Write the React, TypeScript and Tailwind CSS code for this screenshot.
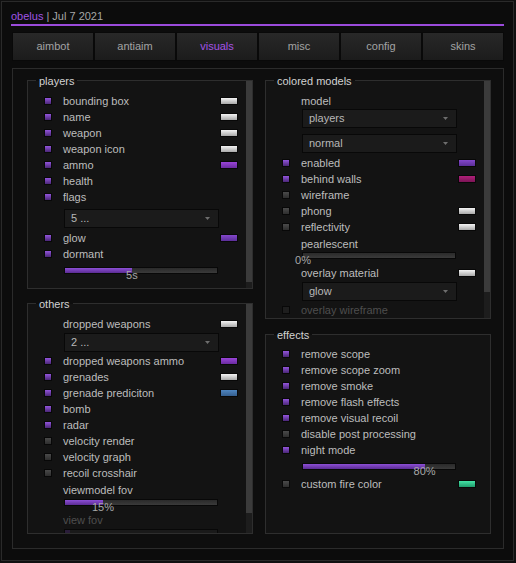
import React from "react";

const font = { fontFamily: '"Liberation Sans", Arial, sans-serif' };

type Swatch = "white" | "purple" | "blue" | "magenta" | "green" | "violet";

const swatchClass: Record<Swatch, string> = {
  white: "bg-gradient-to-b from-[#f4f4f4] to-[#a9a9a9]",
  purple: "bg-gradient-to-b from-[#9a45d8] to-[#6a2ba0]",
  violet: "bg-gradient-to-b from-[#8447cc] to-[#5b2f98]",
  blue: "bg-gradient-to-b from-[#4f86c0] to-[#355f8f]",
  magenta: "bg-gradient-to-b from-[#b0207a] to-[#7c1556]",
  green: "bg-gradient-to-b from-[#44e3a6] to-[#1f9c6c]",
};

const Check = ({ on, dim }: { on?: boolean; dim?: boolean }) => (
  <div
    className={
      "w-[8px] h-[8px] border border-[#080808] " +
      (dim
        ? "bg-[#1e1e1e]"
        : on
          ? "bg-gradient-to-b from-[#9355dc] to-[#4b2778]"
          : "bg-gradient-to-b from-[#4a4a4a] to-[#2e2e2e]")
    }
  />
);

interface RowProps {
  label: string;
  check?: boolean | null;
  swatch?: Swatch;
  dim?: boolean;
  className?: string;
}

const Row = ({ label, check = null, swatch, dim, className = "" }: RowProps) => (
  <div className={"h-[16px] flex items-center " + className}>
    <div className="w-[19px] flex items-center">
      {check !== null && <Check on={check} dim={dim} />}
    </div>
    <span
      className={
        "flex-1 whitespace-nowrap leading-[16px] " +
        (dim ? "text-[#4e4e4e]" : "text-[#bdbdbd]")
      }
    >
      {label}
    </span>
    {swatch && (
      <div className={"w-[18px] h-[8px] border border-[#080808] " + swatchClass[swatch]} />
    )}
  </div>
);

const Dropdown = ({ value, className = "" }: { value: string; className?: string }) => (
  <div
    className={
      "ml-[20px] w-[155px] h-[19px] border border-[#080808] bg-[#1b1b1b] flex items-center pl-[6px] pr-[8px] " +
      className
    }
  >
    <span className="flex-1 text-[#b8b8b8] leading-[17px]">{value}</span>
    <svg width="5" height="3" viewBox="0 0 5 3">
      <path d="M0 0h5L2.5 3z" fill="#6e6e6e" />
    </svg>
  </div>
);

const Slider = ({
  pct,
  label,
  dim,
  className = "",
}: {
  pct: number;
  label?: string;
  dim?: boolean;
  className?: string;
}) => (
  <div
    className={
      "relative ml-[20px] w-[154px] h-[7px] border border-[#080808] " +
      (dim ? "bg-[#1a1a1a] " : "bg-gradient-to-b from-[#2a2a2a] to-[#3a3a3a] ") +
      className
    }
  >
    <div
      className={dim ? "h-full bg-[#2a1d3a]" : "h-full bg-gradient-to-b from-[#8d4fd6] to-[#5b2c93]"}
      style={{ width: `${pct}%` }}
    />
    {label && (
      <span
        className="absolute top-[1px] -translate-x-1/2 text-[#a8a8a8] leading-[13px] whitespace-nowrap"
        style={{ left: `${pct}%` }}
      >
        {label}
      </span>
    )}
  </div>
);

const Group = ({
  title,
  height,
  thumb,
  children,
}: {
  title: string;
  height: string;
  thumb?: string;
  children: React.ReactNode;
}) => (
  <div className={"relative w-[226px] border border-[#2e2e2e] bg-[#131313] flex " + height}>
    <span className="absolute -top-[6px] left-[8px] px-[3px] leading-[13px] text-[#d2d2d2] bg-[linear-gradient(to_bottom,#0e0e0e_50%,#131313_50%)]">
      {title}
    </span>
    <div className={"flex-1 overflow-hidden pl-[16px] " + (thumb ? "pr-[8px]" : "pr-[14px]")}>
      {children}
    </div>
    {thumb && (
      <div className="w-[6px] flex flex-col">
        <div className={"bg-[#3b3b3b] " + thumb} />
        <div className="flex-1 bg-[#1d1d1d]" />
      </div>
    )}
  </div>
);

const tabs = ["aimbot", "antiaim", "visuals", "misc", "config", "skins"];

export default function App() {
  return (
    <div className="w-[516px] h-[563px] bg-[#101010] pt-px pl-px text-[11px]" style={font}>
      <div className="w-[513px] h-[560px] border border-[#2a2a2a] bg-[#0c0c0c]">
        <div className="h-[22px] flex items-end pl-[9px] pb-[1px]">
          <span className="leading-[14px] text-[#a055e4]">obelus</span>
          <span className="leading-[14px] text-[#a6a6a6] ml-[3px]">| Jul 7 2021</span>
        </div>
        <div className="ml-[9px] w-[493px] h-[2px] bg-[#9b4bdb]" />

        <div className="mt-[6px] ml-[10px] flex">
          {tabs.map((t) => (
            <div
              key={t}
              className={
                "w-[82px] h-[29px] border border-[#090909] bg-gradient-to-b from-[#282828] to-[#1c1c1c] flex items-center justify-center " +
                (t === "visuals" ? "text-[#a452e6]" : "text-[#a3a3a3]")
              }
            >
              {t}
            </div>
          ))}
        </div>

        <div className="mt-[7px] ml-[10px] w-[492px] h-[481px] border border-[#2b2b2b] bg-[#0e0e0e] pt-[11px] pl-[14px] flex gap-[12px]">
          <div className="flex flex-col gap-[14px]">
            <Group title="players" height="h-[209px]" thumb="h-[201px]">
              <div className="pt-[12px]">
                <Row label="bounding box" check swatch="white" />
                <Row label="name" check swatch="white" />
                <Row label="weapon" check swatch="white" />
                <Row label="weapon icon" check swatch="white" />
                <Row label="ammo" check swatch="purple" />
                <Row label="health" check />
                <Row label="flags" check />
                <Dropdown value="5 ..." className="mt-[4px]" />
                <Row label="glow" check swatch="violet" className="mt-[2px]" />
                <Row label="dormant" check />
                <Slider pct={44} label="5s" className="mt-[5px]" />
              </div>
            </Group>
            <Group title="others" height="h-[231px]" thumb="h-[209px]">
              <div className="pt-[12px]">
                <Row label="dropped weapons" swatch="white" />
                <Dropdown value="2 ..." className="mt-[1px]" />
                <Row label="dropped weapons ammo" check swatch="purple" className="mt-[1px]" />
                <Row label="grenades" check swatch="white" />
                <Row label="grenade prediciton" check swatch="blue" />
                <Row label="bomb" check />
                <Row label="radar" check />
                <Row label="velocity render" check={false} />
                <Row label="velocity graph" check={false} />
                <Row label="recoil crosshair" check={false} />
                <Row label="viewmodel fov" className="mt-[1px]" />
                <Slider pct={25} label="15%" className="mt-[1px]" />
                <Row label="view fov" dim className="mt-[6px]" />
                <Slider pct={3} dim className="mt-[1px]" />
              </div>
            </Group>
          </div>

          <div className="flex flex-col gap-[15px]">
            <Group title="colored models" height="h-[239px]" thumb="h-[211px]">
              <div className="pt-[12px]">
                <Row label="model" />
                <Dropdown value="players" />
                <Dropdown value="normal" className="mt-[6px]" />
                <Row label="enabled" check swatch="violet" className="mt-[2px]" />
                <Row label="behind walls" check swatch="magenta" />
                <Row label="wireframe" check={false} />
                <Row label="phong" check={false} swatch="white" />
                <Row label="reflectivity" check={false} swatch="white" />
                <Row label="pearlescent" className="mt-[1px]" />
                <Slider pct={0} label="0%" />
                <Row label="overlay material" swatch="white" className="mt-[6px]" />
                <Dropdown value="glow" className="mt-[1px]" />
                <Row label="overlay wireframe" check={false} dim className="mt-[1px]" />
              </div>
            </Group>
            <Group title="effects" height="h-[200px]">
              <div className="pt-[11px]">
                <Row label="remove scope" check />
                <Row label="remove scope zoom" check />
                <Row label="remove smoke" check />
                <Row label="remove flash effects" check />
                <Row label="remove visual recoil" check />
                <Row label="disable post processing" check={false} />
                <Row label="night mode" check />
                <Slider pct={80} label="80%" className="mt-[5px]" />
                <Row label="custom fire color" check={false} swatch="green" className="mt-[6px]" />
              </div>
            </Group>
          </div>
        </div>
      </div>
    </div>
  );
}
